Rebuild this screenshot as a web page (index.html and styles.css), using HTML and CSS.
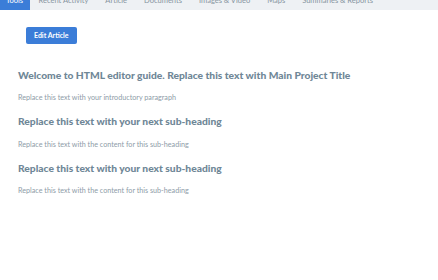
FILE: index.html
```html
<!DOCTYPE html>
<html lang="en">
<head>
    <meta charset="UTF-8">
    <meta name="viewport" content="width=device-width, initial-scale=1.0">
    <title>HTML Editor Guide</title>
    <link rel="stylesheet" href="styles.css">
</head>
<body>
    <nav class="tabs">
        <a class="tab active" href="#">Tools</a>
        <a class="tab" href="#">Recent Activity</a>
        <a class="tab" href="#">Article</a>
        <a class="tab" href="#">Documents</a>
        <a class="tab" href="#">Images &amp; Video</a>
        <a class="tab" href="#">Maps</a>
        <a class="tab" href="#">Summaries &amp; Reports</a>
    </nav>

    <div class="toolbar">
        <button class="edit-btn">Edit Article</button>
    </div>

    <main class="article">
        <h1>Welcome to HTML editor guide. Replace this text with Main Project Title</h1>
        <p>Replace this text with your introductory paragraph</p>
        <h2>Replace this text with your next sub-heading</h2>
        <p>Replace this text with the content for this sub-heading</p>
        <h2>Replace this text with your next sub-heading</h2>
        <p>Replace this text with the content for this sub-heading</p>
    </main>
</body>
</html>
```

FILE: styles.css
```css
body {
    margin: 0;
    font-family: Lato, "Open Sans", sans-serif;
    background: #fff;
    color: #6f8797;
}

/* barra de pestañas, desplazada hacia arriba como en la captura */
.tabs {
    display: flex;
    height: 20px;
    margin-top: -10px;
    background: #eef1f4;
    white-space: nowrap;
    overflow: hidden;
}

.tab {
    display: flex;
    flex-shrink: 0;
    align-items: center;
    padding: 0 8.5px;
    font-size: 7.5px;
    color: #8795a1;
    text-decoration: none;
}

.tab.active {
    background: #3b7dd8;
    color: #fff;
    padding: 0 7px 0 6px;
}

.toolbar {
    padding: 12px 26px 0;
}

.edit-btn {
    height: 17px;
    padding: 0 8px;
    border: none;
    border-radius: 2px;
    background: #3b7dd8;
    color: #fff;
    font-family: inherit;
    font-size: 7px;
    font-weight: bold;
}

.article {
    padding: 25px 18px 0;
}

.article h1,
.article h2 {
    margin: 0;
    font-size: 10.25px;
    font-weight: 900;
    color: #6f8797;
}

.article p {
    margin: 12.5px 0 13px;
    font-size: 7.2px;
    color: #8e9ca8;
}
```
